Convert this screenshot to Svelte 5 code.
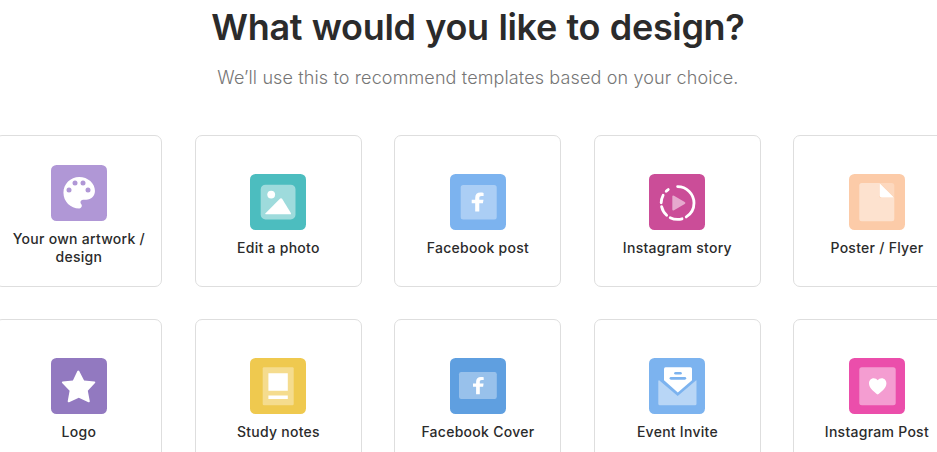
<script lang="ts">
  type Choice = {
    id: string;
    label: string;
    color: string;
  };

  const choices: Choice[] = [
    { id: "artwork", label: "Your own artwork / design", color: "#b097d6" },
    { id: "photo", label: "Edit a photo", color: "#4cbdbf" },
    { id: "facebook-post", label: "Facebook post", color: "#7cb3ef" },
    { id: "story", label: "Instagram story", color: "#cb4d98" },
    { id: "poster", label: "Poster / Flyer", color: "#fccba8" },
    { id: "logo", label: "Logo", color: "#9279c0" },
    { id: "notes", label: "Study notes", color: "#efc94f" },
    { id: "facebook-cover", label: "Facebook Cover", color: "#5f9fe0" },
    { id: "invite", label: "Event Invite", color: "#7cb3ef" },
    { id: "instagram-post", label: "Instagram Post", color: "#eb4eab" },
  ];
</script>

<main>
  <h1>What would you like to design?</h1>
  <p class="subtitle">We’ll use this to recommend templates based on your choice.</p>

  <div class="grid">
    {#each choices as choice (choice.id)}
      <button type="button" class="card">
        <svg class="icon" viewBox="0 0 56 56" fill="#fff" aria-hidden="true">
          <rect width="56" height="56" rx="5.5" fill={choice.color} />
          {#if choice.id === "artwork"}
            <path
              transform="translate(7.2 6.7) scale(1.75)"
              d="M12 3c-4.97 0-9 4.03-9 9s4.03 9 9 9c.83 0 1.5-.67 1.5-1.5 0-.39-.15-.74-.39-1.01-.23-.26-.38-.61-.38-.99 0-.83.67-1.5 1.5-1.5H16c2.76 0 5-2.24 5-5 0-4.42-4.03-8-9-8z"
            />
            <g fill={choice.color}>
              <circle cx="18" cy="25" r="2.5" />
              <circle cx="24" cy="18" r="2.5" />
              <circle cx="32" cy="18" r="2.5" />
              <circle cx="37" cy="25" r="2.5" />
            </g>
          {:else if choice.id === "photo"}
            <rect x="10.7" y="10.7" width="34.8" height="34.8" rx="4.8" opacity=".46" />
            <circle cx="21.2" cy="20.6" r="3.9" />
            <path d="M15.5 40.3v-1.1L30.2 24.6q1.1-.9 1.9.2L41 39.2v1.1z" />
          {:else if choice.id === "facebook-post"}
            <rect x="10.7" y="10.9" width="36" height="34.5" rx="2.5" opacity=".36" />
            <path d="M25.2 37.4v-8.2h-3.5v-3.4h3.5v-1.9c0-3.6 1.9-5.3 5.3-5.3 1.2 0 2.3.1 3.1.3v3.2h-2c-1.8 0-2.3.8-2.3 2.1v1.6h4.2l-.6 3.4h-3.6v8.2z" />
          {:else if choice.id === "story"}
            <circle
              class="ring"
              cx="28.6"
              cy="29"
              r="16.4"
              pathLength="360"
              transform="rotate(-90 28.6 29)"
            />
            <path d="M23.3 22.8q0-1.9 1.7-1L35.7 28q1.6 1 0 2L25 36.2q-1.7.9-1.7-1z" opacity=".52" />
          {:else if choice.id === "poster"}
            <path d="M30.7 9h12.1q2.5 0 2.5 2.5v12z" opacity=".25" />
            <path
              d="M12.8 9h17.9v14.4h14.6v21.4q0 2.5-2.5 2.5h-30q-2.5 0-2.5-2.5V11.5q0-2.5 2.5-2.5z"
              opacity=".45"
            />
            <path d="M30.7 9.3 45 23.4H32.7q-2 0-2-2z" />
          {:else if choice.id === "logo"}
            <path
              d="M26.4 13.1q.9-1.4 1.8 0l4.9 9.3 10.4 1.1q1.5.4.5 1.6l-7.2 7.7 2 10.5q0 1.4-1.4.9l-9.6-4.5-9.7 4.5q-1.4.5-1.4-.9l1.9-10.5-7.5-7.7q-.8-1.2.6-1.6l10.2-1.1z"
            />
          {:else if choice.id === "notes"}
            <rect x="12.7" y="9.3" width="31" height="38" rx="1.2" opacity=".36" />
            <path d="M18.4 15.3h19.4v17.5H18.4zM18.4 37.4h19.4V41H18.4z" />
          {:else if choice.id === "facebook-cover"}
            <rect x="9" y="14" width="37.8" height="27" rx="2.2" opacity=".36" />
            <path d="M26.1 36.2v-7.5H23v-3.1h3.1v-1.8c0-3.3 1.8-4.9 4.8-4.9 1.1 0 2.1.1 2.8.3v2.9h-1.8c-1.6 0-2.1.7-2.1 1.9v1.6h3.8l-.5 3.1h-3.3v7.5z" />
          {:else if choice.id === "invite"}
            <path
              d="M10.1 22.3 28.7 38l18.5-15.7q.3.1.3.7v22.8q0 1.5-1.5 1.5H10.8q-1.5 0-1.5-1.5V23q0-.6.8-.7z"
              opacity=".46"
            />
            <path d="M15 10.8q0-1.5 1.5-1.5h25q1.5 0 1.5 1.5v11.5L28.8 34.6 15 22.3z" />
            <g fill={choice.color}>
              <rect x="25.2" y="14" width="7.6" height="2.6" rx="1.3" />
              <rect x="20.6" y="18.9" width="16.6" height="2.8" rx="1.4" />
            </g>
          {:else if choice.id === "instagram-post"}
            <rect x="10.3" y="9.3" width="36.4" height="38" rx="2.5" opacity=".45" />
            <path
              d="M28.7 36.5c-3-2.3-8.7-6.4-8.7-11.1 0-3 2-5.2 4.7-5.2 1.7 0 3.1.8 4 2.1.9-1.3 2.3-2.1 4-2.1 2.7 0 4.7 2.2 4.7 5.2 0 4.7-5.7 8.8-8.7 11.1z"
            />
          {/if}
        </svg>
        <span class="label">{choice.label}</span>
      </button>
    {/each}
  </div>
</main>

<style>
  :global(body) {
    overflow: hidden;
    background: #fff;
  }

  main {
    box-sizing: border-box;
    width: 965px;
    height: 452px;
    margin-left: -4.6px;
    padding-top: 4px;
    overflow: hidden;
    font-family: Inter, "Noto Sans", sans-serif;
    color: #2b2b2b;
    text-align: center;
  }

  h1 {
    margin: 0;
    font-size: 36px;
    font-weight: 600;
    line-height: 46px;
    letter-spacing: -0.35px;
    word-spacing: 1px;
  }

  .subtitle {
    margin: 16px 0 0;
    font-size: 18px;
    font-weight: 300;
    line-height: 24px;
    letter-spacing: 0.13px;
    color: #767676;
  }

  .grid {
    display: grid;
    grid-template-columns: repeat(5, 167px);
    grid-auto-rows: 152px;
    gap: 32px 32.5px;
    margin-top: 45px;
  }

  .card {
    box-sizing: border-box;
    display: flex;
    flex-direction: column;
    align-items: center;
    justify-content: center;
    gap: 9px;
    padding: 8.5px 10px 0;
    border: 1px solid #dedede;
    border-radius: 7px;
    background: #fff;
    font-family: inherit;
    color: inherit;
  }

  .icon {
    flex: none;
    width: 56px;
    height: 56px;
  }

  .ring {
    fill: none;
    stroke: #fff;
    stroke-width: 2.8;
    stroke-linecap: round;
    stroke-dasharray: 148 16 43 15 35 14 27 18 9 35;
  }

  .label {
    font-size: 14px;
    font-weight: 500;
    line-height: 17.4px;
    letter-spacing: 0.27px;
  }
</style>
